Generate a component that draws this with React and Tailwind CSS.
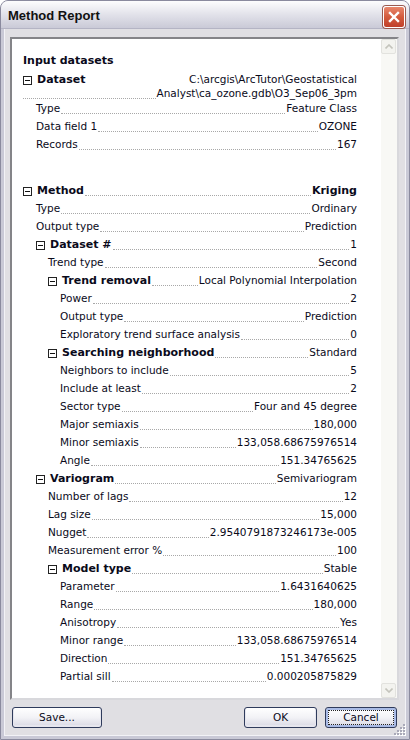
import React from 'react'

const IND = [0, 13, 25, 37]

const rows = [
  { g: true, l: 0, label: 'Method', value: 'Kriging', bold: true },
  { l: 1, label: 'Type', value: 'Ordinary' },
  { l: 1, label: 'Output type', value: 'Prediction' },
  { g: true, l: 1, label: 'Dataset #', value: '1' },
  { l: 2, label: 'Trend type', value: 'Second' },
  { g: true, l: 2, label: 'Trend removal', value: 'Local Polynomial Interpolation' },
  { l: 3, label: 'Power', value: '2' },
  { l: 3, label: 'Output type', value: 'Prediction' },
  { l: 3, label: 'Exploratory trend surface analysis', value: '0' },
  { g: true, l: 2, label: 'Searching neighborhood', value: 'Standard' },
  { l: 3, label: 'Neighbors to include', value: '5' },
  { l: 3, label: 'Include at least', value: '2' },
  { l: 3, label: 'Sector type', value: 'Four and 45 degree' },
  { l: 3, label: 'Major semiaxis', value: '180,000' },
  { l: 3, label: 'Minor semiaxis', value: '133,058.68675976514' },
  { l: 3, label: 'Angle', value: '151.34765625' },
  { g: true, l: 1, label: 'Variogram', value: 'Semivariogram' },
  { l: 2, label: 'Number of lags', value: '12' },
  { l: 2, label: 'Lag size', value: '15,000' },
  { l: 2, label: 'Nugget', value: '2.9540791873246173e-005' },
  { l: 2, label: 'Measurement error %', value: '100' },
  { g: true, l: 2, label: 'Model type', value: 'Stable' },
  { l: 3, label: 'Parameter', value: '1.6431640625' },
  { l: 3, label: 'Range', value: '180,000' },
  { l: 3, label: 'Anisotropy', value: 'Yes' },
  { l: 3, label: 'Minor range', value: '133,058.68675976514' },
  { l: 3, label: 'Direction', value: '151.34765625' },
  { l: 3, label: 'Partial sill', value: '0.000205875829' },
]

const bold = "font-['DejaVu_Sans',sans-serif] font-bold text-[11px]"

function Box() {
  return (
    <span className="w-[9px] h-[9px] border border-[#222] flex items-center justify-center shrink-0 mr-[5px] bg-white">
      <span className="w-[5px] h-px bg-[#111]" />
    </span>
  )
}

function Leader({ className = 'mb-[4px]' }) {
  return <div className={`flex-1 self-end border-b border-dotted border-[#a8a8a8] mx-[1px] ${className}`} />
}

function Row({ r }) {
  const pad = IND[r.l]
  return (
    <div className="h-[18px] flex items-center" style={{ paddingLeft: pad }}>
      {r.g && <Box />}
      <span className={r.g ? bold : ''}>{r.label}</span>
      <Leader />
      <span className={r.bold ? bold : ''}>{r.value}</span>
    </div>
  )
}

function Btn({ children, w, focus }) {
  return (
    <button
      className={`${w} h-[21px] rounded-[3px] border border-[#2f3b5c] bg-gradient-to-b from-white via-[#f2f2f6] to-[#d8d8e4] flex items-center justify-center p-[3px] ${focus ? 'shadow-[inset_0_0_0_2px_#a9bbe6]' : 'shadow-[inset_0_-1px_0_1px_#e6e6ee]'}`}
    >
      <span className={`w-full h-full flex items-center justify-center ${focus ? 'outline outline-1 outline-dotted outline-[#222]' : ''}`}>
        {children}
      </span>
    </button>
  )
}

export default function App() {
  return (
    <div className="w-[410px] h-[740px] flex flex-col bg-[#c9c9d6] rounded-t-[8px] border border-[#8a8a9e] overflow-hidden relative font-['DejaVu_Sans',sans-serif] text-[10.5px] text-[#0a0a1a]">
      <div className="h-[28px] shrink-0 flex items-center justify-between pl-[7px] pr-[4px] bg-gradient-to-b from-[#fdfdfe] via-[#e2e2ea] to-[#cacad7] border-b border-[#b4b4c4]">
        <span className="font-['Liberation_Sans',sans-serif] font-bold text-[13px] text-[#111] mt-[2px]">Method Report</span>
        <div className="w-[22px] h-[22px] mt-[4px] rounded-[3px] border border-white bg-gradient-to-b from-[#e8876c] via-[#d35a3c] to-[#c0402a] shadow-[0_0_0_1px_#9a5a50] flex items-center justify-center">
          <svg width="12" height="12" viewBox="0 0 12 12">
            <path d="M2 2 L10 10 M10 2 L2 10" stroke="#fff" strokeWidth="2.4" strokeLinecap="square" />
          </svg>
        </div>
      </div>

      <div className="flex-1 mx-[3px] mb-[3px] bg-[#e0dfe3] flex flex-col pt-[8px] pl-[5px] pr-[6px] border-x border-b border-[#f2f2f6]">
        <div className="h-[663px] shrink-0 border-2 border-t-[#848488] border-l-[#848488] border-b-[#d8d8dc] border-r-[#d8d8dc] bg-white flex">
          <div className="flex-1 pl-[11px] pr-[24px] pt-[13px]">
            <div className={`h-[19px] flex items-center ${bold}`}>Input datasets</div>
            <div className="h-[29px] pt-[2px]">
              <div className="h-[14px] flex items-center justify-between">
                <div className="flex items-center">
                  <Box />
                  <span className={bold}>Dataset</span>
                </div>
                <span>C:\arcgis\ArcTutor\Geostatistical</span>
              </div>
              <div className="h-[14px] flex items-center">
                <Leader className="mb-[2px] ml-0" />
                <span>Analyst\ca_ozone.gdb\O3_Sep06_3pm</span>
              </div>
            </div>
            <Row r={{ l: 1, label: 'Type', value: 'Feature Class' }} />
            <Row r={{ l: 1, label: 'Data field 1', value: 'OZONE' }} />
            <Row r={{ l: 1, label: 'Records', value: '167' }} />
            <div className="h-[28px]" />
            {rows.map((r, i) => (
              <Row key={i} r={r} />
            ))}
          </div>
          <div className="w-[16px] flex flex-col bg-[#f8f8f5] pr-px">
            <div className="h-[15px] rounded-[2px] border border-[#e2e2de] bg-[#f3f3ef] flex items-center justify-center">
              <svg width="8" height="5" viewBox="0 0 8 5"><path d="M0.5 4.5 L4 1 L7.5 4.5" stroke="#c4c4bc" strokeWidth="1.6" fill="none" /></svg>
            </div>
            <div className="flex-1" />
            <div className="h-[15px] rounded-[2px] border border-[#e2e2de] bg-[#f3f3ef] flex items-center justify-center">
              <svg width="8" height="5" viewBox="0 0 8 5"><path d="M0.5 0.5 L4 4 L7.5 0.5" stroke="#c4c4bc" strokeWidth="1.6" fill="none" /></svg>
            </div>
          </div>
        </div>

        <div className="flex mt-[7px] px-[2px]">
          <Btn w="w-[90px]">Save...</Btn>
          <div className="flex-1" />
          <Btn w="w-[73px]">OK</Btn>
          <div className="w-[8px]" />
          <Btn w="w-[72px]" focus>Cancel</Btn>
        </div>
      </div>

      <svg className="absolute right-[3px] bottom-[3px]" width="12" height="12" viewBox="0 0 12 12">
        {[[9, 1], [6, 4], [9, 4], [3, 7], [6, 7], [9, 7], [0, 10], [3, 10], [6, 10], [9, 10]].map(([x, y], i) => (
          <g key={i}>
            <rect x={x + 1} y={y} width="2" height="2" fill="#ffffff" />
            <rect x={x} y={y - 1} width="2" height="2" fill="#a9a9b8" />
          </g>
        ))}
      </svg>
    </div>
  )
}
